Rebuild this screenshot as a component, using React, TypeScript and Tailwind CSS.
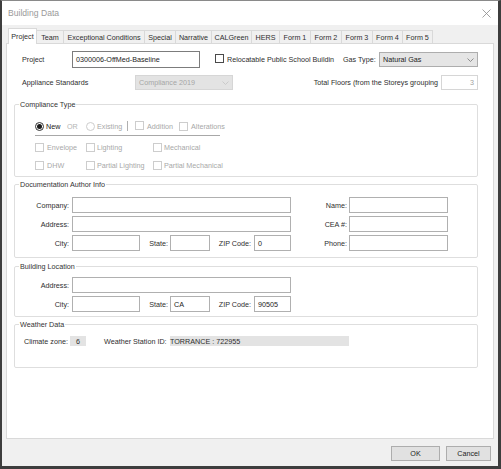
import React from "react";

const tabs = [
  { label: "Project", w: "w-[29px]" },
  { label: "Team", w: "w-[27px]" },
  { label: "Exceptional Conditions", w: "w-[81px]" },
  { label: "Special", w: "w-[31px]" },
  { label: "Narrative", w: "w-[36px]" },
  { label: "CALGreen", w: "w-[40px]" },
  { label: "HERS", w: "w-[28px]" },
  { label: "Form 1", w: "w-[31px]" },
  { label: "Form 2", w: "w-[31px]" },
  { label: "Form 3", w: "w-[31px]" },
  { label: "Form 4", w: "w-[30px]" },
  { label: "Form 5", w: "w-[30px]" },
];

function Box({ dark }: { dark?: boolean }) {
  return (
    <span
      className={
        dark
          ? "inline-block h-[9px] w-[9px] shrink-0 border border-[#4a4a4a] bg-white"
          : "inline-block h-[9px] w-[9px] shrink-0 border border-[#cdcdcd] bg-white"
      }
    />
  );
}

function Field({ w, value }: { w: string; value?: string }) {
  return (
    <div
      className={`${w} flex h-[16px] shrink-0 items-center border border-[#b0b0b0] bg-white px-[3px] text-[#222]`}
    >
      {value}
    </div>
  );
}

function Chevron({ light }: { light?: boolean }) {
  return (
    <svg width="7" height="4" viewBox="0 0 7 4" className="shrink-0">
      <path d="M0.5 0.5 L3.5 3.5 L6.5 0.5" fill="none" stroke={light ? "#c4c4c4" : "#777"} strokeWidth="0.8" />
    </svg>
  );
}

function Group({ title, children }: { title: string; children: React.ReactNode }) {
  return (
    <fieldset className="w-[464px] rounded-[2px] border border-[#dedede]">
      <legend className="ml-[4px] px-[1px] leading-[9px] text-[#333]">{title}</legend>
      {children}
    </fieldset>
  );
}

export default function App() {
  return (
    <div className="flex h-[469px] w-[501px] flex-col border-t border-l-2 border-r-[3px] border-b-[3px] border-t-[#8a8a8a] border-l-[#3d3d3d] border-r-[#3d3d3d] border-b-[#3d3d3d] bg-[#f0f0f0] font-['Liberation_Sans',Arial,sans-serif] text-[7.2px] leading-[9px] text-[#2e2e2e]">
      {/* title bar */}
      <div className="flex h-[24px] shrink-0 items-center justify-between bg-white pl-[6px] pr-[7px]">
        <span className="text-[8.6px] text-[#9a9a9a]">Building Data</span>
        <svg width="9" height="9" viewBox="0 0 9 9">
          <path d="M0.5 0.5 L8.5 8.5 M8.5 0.5 L0.5 8.5" stroke="#8a8a8a" strokeWidth="0.8" />
        </svg>
      </div>

      <div className="flex flex-col px-[4px] pt-[3px]">
        {/* tabs */}
        <div className="flex h-[15px] items-end pl-[2px]">
          {tabs.map((t, i) =>
            i === 0 ? (
              <div
                key={t.label}
                className={`${t.w} relative z-10 -mb-px flex h-[16px] items-center justify-center border border-b-0 border-[#d9d9d9] bg-white`}
              >
                {t.label}
              </div>
            ) : (
              <div
                key={t.label}
                className={`${t.w} flex h-[13px] items-center justify-center whitespace-nowrap border-t border-r border-[#d9d9d9] bg-[#f0f0f0]`}
              >
                {t.label}
              </div>
            )
          )}
        </div>

        {/* panel */}
        <div className="flex h-[396px] flex-col border border-[#d9d9d9] bg-white pl-[7px]">
          <div className="mt-[7px] flex h-[17px] items-center pl-[8px]">
            <span className="w-[50px]">Project</span>
            <div className="flex h-[17px] w-[128px] items-center border border-[#7c7c7c] px-[3px] text-[#222]">
              0300006-OffMed-Baseline
            </div>
            <span className="ml-[15px]">
              <Box dark />
            </span>
            <span className="ml-[3px] w-[116px] overflow-hidden whitespace-nowrap">Relocatable Public School Buildin</span>
            <span className="w-[36px] whitespace-nowrap">Gas Type:</span>
            <div className="flex h-[15px] w-[99px] items-center justify-between border border-[#adadad] bg-[#e5e5e5] pl-[3px] pr-[3px] text-[#222]">
              <span>Natural Gas</span>
              <Chevron />
            </div>
          </div>

          <div className="mt-[6px] flex h-[17px] w-[464px] items-center justify-between pl-[8px]">
            <div className="flex items-center">
              <span className="w-[113px]">Appliance Standards</span>
              <div className="flex h-[15px] w-[98px] items-center justify-between border border-[#d6d6d6] bg-[#e3e3e3] px-[3px] text-[#a6a6a6]">
                <span>Compliance 2019</span>
                <Chevron light />
              </div>
            </div>
            <div className="flex items-center">
              <span className="whitespace-nowrap">Total Floors (from the Storeys grouping</span>
              <div className="ml-[3px] flex h-[15px] w-[37px] items-center justify-end border border-[#d6d6d6] pr-[3px] text-[#a0a0a0]">
                3
              </div>
            </div>
          </div>

          {/* Compliance Type */}
          <div className="mt-[9px]">
            <Group title="Compliance Type">
              <div className="pl-[20px] pt-[12px] pb-[6px] text-[#a8a8a8]">
                <div className="flex h-[10px] items-center">
                  <span className="flex h-[9px] w-[9px] items-center justify-center rounded-full border border-[#333]">
                    <span className="h-[5px] w-[5px] rounded-full bg-[#1a1a1a]" />
                  </span>
                  <span className="ml-[2px] w-[21px] text-[#222]">New</span>
                  <span className="w-[19px] text-[#b4b4b4]">OR</span>
                  <span className="h-[9px] w-[9px] rounded-full border border-[#cdcdcd]" />
                  <span className="ml-[2px] w-[28px]">Existing</span>
                  <span className="ml-[2px] h-[10px] w-px bg-[#b0b0b0]" />
                  <span className="ml-[7px]">
                    <Box />
                  </span>
                  <span className="ml-[3px] w-[32px]">Addition</span>
                  <Box />
                  <span className="ml-[3px]">Alterations</span>
                </div>
                <div className="mt-[4px] h-px w-[185px] bg-[#a8a8a8]" />
                <div className="mt-[6px] flex h-[10px] items-center">
                  <Box />
                  <span className="ml-[3px] w-[39px]">Envelope</span>
                  <Box />
                  <span className="ml-[2px] w-[56px]">Lighting</span>
                  <Box />
                  <span className="ml-[2px]">Mechanical</span>
                </div>
                <div className="mt-[8px] flex h-[10px] items-center">
                  <Box />
                  <span className="ml-[3px] w-[39px]">DHW</span>
                  <Box />
                  <span className="ml-[2px] w-[56px]">Partial Lighting</span>
                  <Box />
                  <span className="ml-[2px]">Partial Mechanical</span>
                </div>
              </div>
            </Group>
          </div>

          {/* Documentation Author Info */}
          <div className="mt-[3px]">
            <Group title="Documentation Author Info">
              <div className="flex flex-col gap-[3px] pt-[8px] pb-[6px]">
                <div className="flex items-center">
                  <span className="w-[54px] text-right">Company:</span>
                  <span className="ml-[3px]"><Field w="w-[219px]" /></span>
                  <span className="w-[56px] text-right">Name:</span>
                  <span className="ml-[2px]"><Field w="w-[99px]" /></span>
                </div>
                <div className="flex items-center">
                  <span className="w-[54px] text-right">Address:</span>
                  <span className="ml-[3px]"><Field w="w-[219px]" /></span>
                  <span className="w-[56px] text-right">CEA #:</span>
                  <span className="ml-[2px]"><Field w="w-[99px]" /></span>
                </div>
                <div className="flex items-center">
                  <span className="w-[54px] text-right">City:</span>
                  <span className="ml-[3px]"><Field w="w-[68px]" /></span>
                  <span className="w-[28px] text-right">State:</span>
                  <span className="ml-[2px]"><Field w="w-[40px]" /></span>
                  <span className="w-[41px] whitespace-nowrap text-right">ZIP Code:</span>
                  <span className="ml-[3px]"><Field w="w-[37px]" value="0" /></span>
                  <span className="w-[56px] text-right">Phone:</span>
                  <span className="ml-[2px]"><Field w="w-[99px]" /></span>
                </div>
              </div>
            </Group>
          </div>

          {/* Building Location */}
          <div className="mt-[4px]">
            <Group title="Building Location">
              <div className="flex flex-col gap-[3px] pt-[6px] pb-[4px]">
                <div className="flex items-center">
                  <span className="w-[54px] text-right">Address:</span>
                  <span className="ml-[3px]"><Field w="w-[219px]" /></span>
                </div>
                <div className="flex items-center">
                  <span className="w-[54px] text-right">City:</span>
                  <span className="ml-[3px]"><Field w="w-[68px]" /></span>
                  <span className="w-[28px] text-right">State:</span>
                  <span className="ml-[2px]"><Field w="w-[40px]" value="CA" /></span>
                  <span className="w-[41px] whitespace-nowrap text-right">ZIP Code:</span>
                  <span className="ml-[3px]"><Field w="w-[37px]" value="90505" /></span>
                </div>
              </div>
            </Group>
          </div>

          {/* Weather Data */}
          <div className="mt-[3px]">
            <Group title="Weather Data">
              <div className="mt-[7px] mb-[21px] flex h-[10px] items-center pl-[9px]">
                <span className="w-[46px] whitespace-nowrap">Climate zone:</span>
                <span className="flex h-[10px] w-[16px] items-center justify-center bg-[#e3e3e3]">6</span>
                <span className="ml-[18px] w-[66px] whitespace-nowrap">Weather Station ID:</span>
                <span className="flex h-[10px] w-[179px] items-center whitespace-nowrap bg-[#e3e3e3]">TORRANCE : 722955</span>
              </div>
            </Group>
          </div>
        </div>
      </div>

      {/* buttons */}
      <div className="flex flex-1 items-start justify-end gap-[6px] pt-[7px] pr-[7px]">
        <button className="flex h-[15px] w-[49px] items-center justify-center border border-[#adadad] bg-[#e1e1e1] text-[#222]">
          OK
        </button>
        <button className="flex h-[15px] w-[45px] items-center justify-center border border-[#adadad] bg-[#e1e1e1] text-[#222]">
          Cancel
        </button>
      </div>
    </div>
  );
}
